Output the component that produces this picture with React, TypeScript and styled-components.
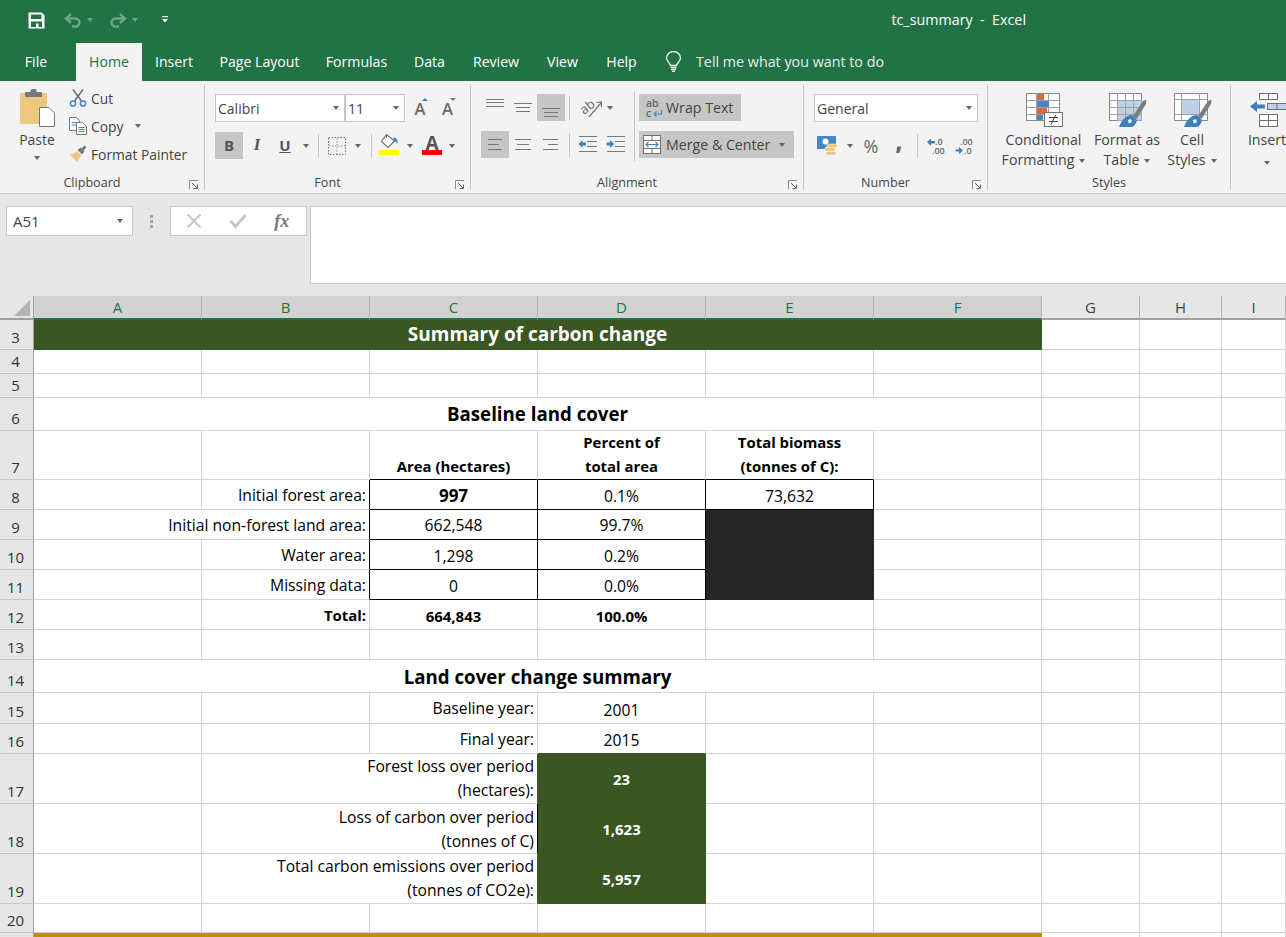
import React from 'react';
import styled, { createGlobalStyle } from 'styled-components';

const UI_FONT = '"Open Sans", "Noto Sans", "Liberation Sans", sans-serif';
const GREEN = '#217346';
const INK = '#444';
const LINE = '#d4d4d4';
const DARK_GREEN = '#3a5623';
const COLUMNS = '34px repeat(6, 168px) 98px 82px 1fr';

const GlobalStyle = createGlobalStyle`
  html, body { margin: 0; padding: 0; background: #fff; }
`;

const Page = styled.div`
  width: 1286px;
  height: 937px;
  overflow: hidden;
  background: #fff;
  font-family: ${UI_FONT};
  font-size: 14px;
  color: ${INK};
`;

/* title bar */
const TitleBar = styled.div`
  height: 41px;
  box-sizing: border-box;
  padding: 0 0 1px 28px;
  background: ${GREEN};
  display: flex;
  align-items: center;
`;
const QuickButton = styled.div<{ $w: number }>`
  width: ${(p) => p.$w}px;
  height: 20px;
  display: flex;
  align-items: center;
  gap: 5px;
`;
const DocTitle = styled.div`
  margin-left: auto;
  padding: 0 260px 2px 0;
  color: #fff;
  font-size: 14.3px;
  white-space: pre;
`;

/* tabs */
const TabBar = styled.div`
  height: 40px;
  background: ${GREEN};
  display: flex;
  align-items: flex-end;
`;
const Tab = styled.div<{ $w: number; $on?: boolean }>`
  width: ${(p) => p.$w}px;
  height: 38px;
  display: flex;
  align-items: center;
  justify-content: center;
  padding-bottom: 2px;
  box-sizing: border-box;
  font-size: 14.1px;
  white-space: nowrap;
  color: ${(p) => (p.$on ? GREEN : '#fff')};
  background: ${(p) => (p.$on ? '#f3f3f3' : 'transparent')};
`;
const FileTab = styled(Tab)`
  padding-right: 4px;
`;
const TellMe = styled.div`
  height: 38px;
  margin-left: 14px;
  display: flex;
  align-items: center;
  gap: 14px;
  padding-bottom: 2px;
  box-sizing: border-box;
  color: #e4efe9;
  font-size: 14.3px;
  white-space: nowrap;
`;

/* ribbon */
const Ribbon = styled.div`
  height: 108px;
  padding-top: 4px;
  background: #f3f3f3;
  border-bottom: 1px solid #d2d2d2;
  display: flex;
  overflow: hidden;
`;
const Group = styled.div<{ $w: number }>`
  position: relative;
  flex: none;
  width: ${(p) => p.$w}px;
  height: 105px;
  box-sizing: border-box;
  border-right: 1px solid #c6c6c6;
  display: flex;
  flex-direction: column;
  &:last-child { border-right: none; }
`;
const GroupBody = styled.div<{ $pad?: number }>`
  flex: 1;
  display: flex;
  min-height: 0;
  padding-left: ${(p) => p.$pad ?? 0}px;
`;
const GroupLabel = styled.div<{ $launcher?: boolean }>`
  height: 15px;
  line-height: 15px;
  padding-right: ${(p) => (p.$launcher ? 20 : 0)}px;
  text-align: center;
  font-size: 12.6px;
`;
const Launcher = styled.div`
  position: absolute;
  right: 5px;
  bottom: 0;
  width: 10px;
  height: 10px;
  line-height: 0;
`;
const Caret = styled.span<{ $c?: string }>`
  display: inline-block;
  flex: none;
  width: 0;
  height: 0;
  border-top: 4px solid ${(p) => p.$c || '#666'};
  border-left: 3.5px solid transparent;
  border-right: 3.5px solid transparent;
`;
const PasteColumn = styled.div`
  width: 36px;
  margin-left: 19px;
  padding-top: 3px;
  display: flex;
  flex-direction: column;
  align-items: center;
  font-size: 14px;
  line-height: 20px;
`;
const PasteText = styled.div`
  margin-top: 3px;
  margin-bottom: 6px;
`;
const SmallColumn = styled.div`
  margin-left: 14px;
  margin-top: -1px;
  display: flex;
  flex-direction: column;
`;
const SmallButton = styled.div`
  height: 28px;
  display: flex;
  align-items: center;
  gap: 4px;
  font-size: 13.8px;
  white-space: nowrap;
`;
const SmallIcon = styled.span`
  width: 18px;
  height: 18px;
  line-height: 0;
  flex: none;
`;
const CopyCaret = styled(Caret)`
  margin-left: 8px;
`;
const Stack = styled.div<{ $pad?: number }>`
  padding: 9px 0 0 ${(p) => p.$pad ?? 10}px;
  display: flex;
  flex-direction: column;
  gap: 10px;
`;
const ToolRow = styled.div<{ $tall?: boolean }>`
  display: flex;
  height: ${(p) => (p.$tall ? 28 : 27)}px;
  align-items: center;
`;
const ToolButton = styled.div<{ $w: number; $on?: boolean }>`
  position: relative;
  flex: none;
  width: ${(p) => p.$w}px;
  height: 27px;
  display: flex;
  align-items: center;
  justify-content: center;
  background: ${(p) => (p.$on ? '#c6c6c6' : 'transparent')};
`;
const OrientButton = styled(ToolButton)`
  gap: 2px;
`;
const WideButton = styled(ToolButton)<{ $pl: number; $gap: number }>`
  justify-content: flex-start;
  padding-left: ${(p) => p.$pl}px;
  gap: ${(p) => p.$gap}px;
  box-sizing: border-box;
  font-size: 14.2px;
  white-space: nowrap;
`;
const MergeCaret = styled(Caret)`
  margin-left: 4px;
`;
const Divider = styled.div<{ $gap: number }>`
  flex: none;
  width: 1px;
  height: 24px;
  margin: 0 ${(p) => p.$gap}px;
  background: #c6c6c6;
`;
const TallDivider = styled.div`
  flex: none;
  width: 1px;
  height: 70px;
  margin: 6px 4px 0 4px;
  background: #c6c6c6;
`;
const SelectBox = styled.div<{ $w: number }>`
  flex: none;
  width: ${(p) => p.$w}px;
  height: 28px;
  box-sizing: border-box;
  background: #fff;
  border: 1px solid #c6c6c6;
  display: flex;
  align-items: center;
  justify-content: space-between;
  padding: 0 5px 0 2px;
  font-size: 14px;
`;
const GrowButton = styled(ToolButton)`
  margin-left: 1px;
`;
const SizeStep = styled.span<{ $down?: boolean }>`
  position: relative;
  font-size: 16.5px;
  font-weight: 600;
  color: #6a6a6a;
  &::after {
    content: '';
    position: absolute;
    top: 1px;
    right: -3px;
    border-left: 3px solid transparent;
    border-right: 3px solid transparent;
    ${(p) =>
      p.$down ? 'border-top: 3px solid #4a7fb5;' : 'border-bottom: 3px solid #4a7fb5;'}
  }
`;
const FontMark = styled.span<{ $kind: 'b' | 'i' | 'u' }>`
  font-family: ${(p) => (p.$kind === 'i' ? '"Liberation Serif", serif' : UI_FONT)};
  font-size: ${(p) => (p.$kind === 'i' ? 17 : 15)}px;
  font-weight: 700;
  font-style: ${(p) => (p.$kind === 'i' ? 'italic' : 'normal')};
  text-decoration: ${(p) => (p.$kind === 'u' ? 'underline' : 'none')};
  padding-bottom: 2px;
  color: #555;
`;
const ColorMark = styled.div<{ $bar: string }>`
  position: relative;
  width: 20px;
  height: 27px;
  text-align: center;
  font-size: 19px;
  line-height: 22px;
  font-weight: 700;
  color: #555;
  &::after {
    content: '';
    position: absolute;
    left: 0;
    right: 0;
    top: 18px;
    height: 5px;
    background: ${(p) => p.$bar};
  }
`;
const FillMark = styled(ColorMark)`
  line-height: 0;
  padding-top: 1px;
`;
const Symbol = styled.span<{ $size: number; $bold?: boolean }>`
  font-size: ${(p) => p.$size}px;
  font-weight: ${(p) => (p.$bold ? 800 : 400)};
  padding-bottom: ${(p) => (p.$bold ? 10 : 0)}px;
  color: #666;
`;
const BigButton = styled.div<{ $w: number }>`
  flex: none;
  width: ${(p) => p.$w}px;
  padding-top: 8px;
  display: flex;
  flex-direction: column;
  align-items: center;
  font-size: 14.2px;
  line-height: 20px;
  text-align: center;
  white-space: nowrap;
`;
const BigIcon = styled.div`
  height: 35px;
  margin-bottom: 2px;
  padding-left: 2px;
  line-height: 0;
`;
const InlineCaret = styled(Caret)`
  margin-left: 5px;
  vertical-align: 2px;
`;

/* formula bar */
const FormulaBar = styled.div`
  height: 102px;
  box-sizing: border-box;
  padding: 12px 0 0 6px;
  background: #e6e6e6;
  display: flex;
  align-items: flex-start;
`;
const NameBox = styled.div`
  width: 127px;
  height: 30px;
  box-sizing: border-box;
  background: #fff;
  border: 1px solid #c6c6c6;
  display: flex;
  align-items: center;
  justify-content: space-between;
  padding: 0 9px 0 6px;
  font-size: 15px;
`;
const Grip = styled.div`
  width: 37px;
  height: 30px;
  display: flex;
  flex-direction: column;
  align-items: center;
  justify-content: center;
  gap: 2px;
  & > i { width: 3px; height: 3px; background: #a6a6a6; }
`;
const FuncBox = styled.div`
  width: 137px;
  height: 30px;
  box-sizing: border-box;
  background: #fff;
  border: 1px solid #c6c6c6;
  display: flex;
  align-items: center;
  justify-content: space-around;
  padding: 0 3px 0 1px;
`;
const FxMark = styled.span`
  font-family: "Liberation Serif", serif;
  font-style: italic;
  font-weight: 700;
  font-size: 18px;
  color: #777;
`;
const FormulaInput = styled.div`
  flex: 1;
  height: 78px;
  margin-left: 3px;
  box-sizing: border-box;
  background: #fff;
  border: 1px solid #c6c6c6;
  border-right: none;
`;

/* sheet */
const HeaderRow = styled.div`
  display: grid;
  grid-template-columns: ${COLUMNS};
  height: 24px;
  background: #e6e6e6;
`;
const Corner = styled.div`
  box-sizing: border-box;
  padding: 4px 0 0 14px;
  border-right: 1px solid #9f9f9f;
  border-bottom: 2px solid #9f9f9f;
  line-height: 0;
`;
const ColHead = styled.div<{ $on?: boolean }>`
  box-sizing: border-box;
  display: flex;
  align-items: center;
  justify-content: center;
  font-size: 15px;
  background: ${(p) => (p.$on ? '#d2d2d2' : '#e6e6e6')};
  color: ${(p) => (p.$on ? GREEN : INK)};
  border-right: 1px solid #b4b4b4;
  border-bottom: 2px solid ${(p) => (p.$on ? GREEN : '#9f9f9f')};
`;
const Row = styled.div<{ $h: number }>`
  display: grid;
  grid-template-columns: ${COLUMNS};
  grid-template-rows: minmax(0, 1fr);
  height: ${(p) => p.$h}px;
`;
const RowHead = styled.div`
  box-sizing: border-box;
  min-height: 0;
  background: #e6e6e6;
  border-right: 1px solid #9f9f9f;
  border-bottom: 1px solid #c6c6c6;
  display: flex;
  align-items: flex-end;
  justify-content: center;
  padding-right: 2px;
  font-size: 15px;
  line-height: 24px;
  color: #333;
`;

type CellProps = {
  $span?: number;
  $align?: 'left' | 'center' | 'right';
  $v?: 'center' | 'end';
  $weight?: number;
  $size?: number;
  $fill?: string;
  $color?: string;
  $r?: string;
  $b?: string;
  $lift?: number;
};

const Cell = styled.div<CellProps>`
  box-sizing: border-box;
  min-width: 0;
  min-height: 0;
  grid-column: span ${(p) => p.$span ?? 1};
  display: flex;
  flex-direction: column;
  justify-content: ${(p) => (p.$v === 'center' ? 'center' : 'flex-end')};
  text-align: ${(p) => p.$align ?? 'center'};
  padding: 0 ${(p) => (p.$align === 'right' ? 3 : 0)}px ${(p) => p.$lift ?? 1}px 0;
  font-size: ${(p) => p.$size ?? 15.7}px;
  font-weight: ${(p) => p.$weight ?? 400};
  line-height: 24px;
  white-space: nowrap;
  color: ${(p) => p.$color ?? '#000'};
  background: ${(p) => p.$fill ?? '#fff'};
  border-right: 1px solid ${(p) => p.$r ?? p.$fill ?? LINE};
  border-bottom: 1px solid ${(p) => p.$b ?? p.$fill ?? LINE};
`;
const ResultCell = styled(Cell)`
  padding-top: 2px;
`;

const Blanks = ({ n }: { n: number }) => (
  <>
    {Array.from({ length: n }, (_, i) => (
      <Cell key={i} />
    ))}
  </>
);

const Gold = styled.div`
  grid-column: span 6;
  background: #bf8f00;
`;

/* icons */
const SaveIcon = () => (
  <svg width="17" height="17" viewBox="0 0 17 17">
    <path d="M0.5 0.5H13.5L16.5 3.5V16.5H0.5Z" fill="#fff" />
    <rect x="3" y="2.5" width="10.5" height="4.5" fill={GREEN} />
    <rect x="3" y="9.5" width="11" height="5.5" fill={GREEN} />
    <rect x="8" y="11.5" width="2.5" height="3.5" fill="#fff" />
  </svg>
);
const UndoIcon = ({ flip }: { flip?: boolean }) => (
  <svg width="18" height="15" viewBox="0 0 18 15">
    <g transform={flip ? 'translate(18 0) scale(-1 1)' : undefined}>
      <path d="M7 1L2 5.5L7 10M2.5 5.5H11.5A4 4 0 0 1 11.5 13.5H8" fill="none" stroke="#6aa588" strokeWidth="2.4" />
    </g>
  </svg>
);
const CustomizeIcon = () => (
  <svg width="8" height="8" viewBox="0 0 8 8">
    <rect x="1" y="0" width="6" height="1.2" fill="#fff" />
    <path d="M1 3H7L4 6.5Z" fill="#fff" />
  </svg>
);
const BulbIcon = () => (
  <svg width="17" height="21" viewBox="0 0 17 21">
    <path d="M5.5 14.5C5 11.5 1.5 10.5 1.5 7A7 6.5 0 0 1 15.5 7C15.5 10.5 12 11.5 11.5 14.5Z" fill="none" stroke="#eef5f1" strokeWidth="1.3" />
    <path d="M5.5 16.5H11.5M6 18.5H11M7 20.3H10" stroke="#eef5f1" strokeWidth="1.3" />
  </svg>
);
const PasteIcon = () => (
  <svg width="36" height="39" viewBox="0 0 36 39">
    <rect x="1" y="5" width="27" height="31" rx="1" fill="#edc87e" />
    <rect x="6" y="4" width="17" height="5" rx="1" fill="#787878" />
    <rect x="11.5" y="1" width="6" height="4" rx="1.5" fill="#787878" />
    <path d="M20.5 19.5H30L35.5 25V38.5H20.5Z" fill="#fff" stroke="#787878" />
  </svg>
);
const ScissorsIcon = () => (
  <svg width="18" height="18" viewBox="0 0 18 18">
    <path d="M5.5 12L14 0.5M12.5 12L4 0.5" stroke="#6f6f6f" strokeWidth="1.6" fill="none" />
    <circle cx="4" cy="14.5" r="2.6" fill="none" stroke="#4a86c5" strokeWidth="1.5" />
    <circle cx="14" cy="14.5" r="2.6" fill="none" stroke="#4a86c5" strokeWidth="1.5" />
  </svg>
);
const CopyIcon = () => (
  <svg width="18" height="18" viewBox="0 0 18 18">
    <path d="M0.5 0.5H7.5L10.5 3.5V13.5H0.5Z" fill="#fff" stroke="#777" />
    <path d="M2.5 5.5H8M2.5 8H8" stroke="#4a86c5" />
    <path d="M7.5 5.5H13.5L17.5 9.5V17.5H7.5Z" fill="#fff" stroke="#777" />
    <path d="M9.5 10.5H15.5M9.5 12.5H15.5M9.5 14.5H15.5" stroke="#4a86c5" />
  </svg>
);
const PainterIcon = () => (
  <svg width="18" height="18" viewBox="0 0 18 18">
    <path d="M0.5 9.5C4 10 6.5 7.5 7.5 6L12.5 10.5C11 12.5 9.5 15 7.5 17C5.5 14 3 11.5 0.5 9.5Z" fill="#ecc587" />
    <path d="M8.5 5L11.5 2.5L12.5 3.5L15.5 0.5L17.5 2.5L14.5 5.5L15.5 6.5L13 9.5Z" fill="#787878" />
  </svg>
);
const BordersIcon = () => (
  <svg width="18" height="18" viewBox="0 0 18 18">
    <rect x="0.5" y="0.5" width="17" height="17" fill="none" stroke="#777" strokeDasharray="1.5 1.5" />
    <path d="M9 1V17M1 9H17" stroke="#999" strokeDasharray="1.5 1.5" />
  </svg>
);
const FillIcon = () => (
  <svg width="20" height="17" viewBox="0 0 20 17">
    <path d="M7.5 1.5L2.5 8.5L9 14.5L15.5 8Z" fill="#fff" stroke="#6f6f6f" strokeWidth="1.2" />
    <path d="M7.5 1V5" stroke="#6f6f6f" strokeWidth="1.2" />
    <path d="M14 4.5C17.5 4.5 19 7 18.5 11C17.5 9 16.5 8 15.5 8Z" fill="#4a7fb5" />
  </svg>
);
const LinesIcon = ({ lines }: { lines: number[][] }) => (
  <svg width="20" height="20" viewBox="0 0 20 20">
    {lines.map(([x1, x2, y], i) => (
      <line key={i} x1={x1} x2={x2} y1={y} y2={y} stroke="#777" />
    ))}
  </svg>
);
const OrientationIcon = () => (
  <svg width="26" height="26" viewBox="0 0 26 26" overflow="visible">
    <text x="2" y="17" fontSize="13" fontFamily={UI_FONT} fill="#666" transform="rotate(-38 8 14)">ab</text>
    <path d="M10 22L22 8" stroke="#777" strokeWidth="1.2" />
    <path d="M17.5 7.5L22.5 7L22.5 12" fill="none" stroke="#777" strokeWidth="1.2" />
  </svg>
);
const IndentIcon = ({ more }: { more?: boolean }) => (
  <svg width="20" height="20" viewBox="0 0 20 20">
    <path d="M1 1.5H19M9 6.5H19M9 11.5H19M1 16.5H19" stroke="#777" fill="none" />
    <path
      d={
        more
          ? 'M8 9L4 5V7.5H0.5V10.5H4V13Z'
          : 'M0.5 9L4.5 5V7.5H8V10.5H4.5V13Z'
      }
      fill="#3f7fbf"
    />
  </svg>
);
const WrapIcon = () => (
  <svg width="18" height="26" viewBox="0 0 18 26">
    <text x="0" y="12" fontSize="10.5" fontWeight="600" fontFamily={UI_FONT} fill="#666">ab</text>
    <text x="0" y="22" fontSize="10.5" fontWeight="600" fontFamily={UI_FONT} fill="#666">c</text>
    <path d="M15.5 15V19H8M10.5 16.5L8 19L10.5 21.5" fill="none" stroke="#4a86c5" strokeWidth="1.2" />
  </svg>
);
const MergeIcon = () => (
  <svg width="18" height="19" viewBox="0 0 18 19">
    <rect x="0.5" y="0.5" width="17" height="18" fill="#fff" stroke="#6f6f6f" />
    <path d="M0.5 5.5H17.5M0.5 13.5H17.5M9 0.5V5.5M9 13.5V18.5" stroke="#6f6f6f" />
    <path d="M3 9.5H15M5.5 7L3 9.5L5.5 12M12.5 7L15 9.5L12.5 12" fill="none" stroke="#3f7fbf" strokeWidth="1.1" />
  </svg>
);
const CurrencyIcon = () => (
  <svg width="22" height="20" viewBox="0 0 22 20">
    <rect x="0" y="0" width="19" height="11" fill="#4a86c5" />
    <rect x="0" y="11" width="8" height="2" fill="#4a86c5" />
    <circle cx="8.5" cy="5.5" r="3" fill="#fff" />
    <rect x="10" y="8" width="10" height="3.5" rx="1" fill="#edc87e" stroke="#f3f3f3" strokeWidth="0.5" />
    <rect x="8" y="11.5" width="10" height="3.5" rx="1" fill="#edc87e" stroke="#f3f3f3" strokeWidth="0.5" />
    <rect x="9" y="15.5" width="10" height="3.5" rx="1" fill="#edc87e" stroke="#f3f3f3" strokeWidth="0.5" />
  </svg>
);
const DecimalIcon = ({ less }: { less?: boolean }) => (
  <svg width="18" height="24" viewBox="0 0 18 24">
    <text x={less ? 5 : 8} y="11" fontSize="9" fontWeight="600" fontFamily={UI_FONT} fill="#666">{less ? '.00' : '.0'}</text>
    <text x={less ? 9 : 5} y="20" fontSize="9" fontWeight="600" fontFamily={UI_FONT} fill="#666">{less ? '.0' : '.00'}</text>
    <path
      d={less ? 'M0.5 15.5H4V13L8 16.5L4 20V17.5H0.5Z' : 'M0 8L4 4.5V7H8V9.5H4V12Z'}
      fill="#3f7fbf"
    />
  </svg>
);
const ConditionalIcon = () => (
  <svg width="38" height="35" viewBox="0 0 38 35">
    <rect x="0.5" y="0.5" width="33" height="27" fill="#fff" stroke="#8a8a8a" />
    <path d="M0.5 7.5H33.5M0.5 14.5H33.5M0.5 21.5H33.5M10.5 0.5V27.5M22.5 0.5V27.5" stroke="#a0a0a0" />
    <rect x="11" y="1" width="7" height="6" fill="#dd6b40" />
    <rect x="11" y="8" width="12" height="6" fill="#4a86c5" />
    <rect x="11" y="15" width="10" height="6" fill="#dd6b40" />
    <rect x="11" y="22" width="6" height="5" fill="#4a86c5" />
    <rect x="18.5" y="19.5" width="18" height="14" fill="#fff" stroke="#6f6f6f" />
    <path d="M23 24.5H32M23 28.5H32M30 21.5L25 31.5" fill="none" stroke="#444" strokeWidth="1" />
  </svg>
);
const BrushMark = () => (
  <>
    <path d="M24 23L34 8L37.5 6.5L37 11L27.5 26Z" fill="#7d7d7d" />
    <path d="M10 34C12 28 17 22 23 22L28 27C27 31 25 34 22 34Z" fill="#3f7fbf" />
    <path d="M19 27C20.5 25.5 22.5 26 23 28C22.5 30 21 30.5 19.5 30Z" fill="#f3f3f3" />
  </>
);
const TableIcon = () => (
  <svg width="38" height="35" viewBox="0 0 38 35">
    <rect x="0.5" y="0.5" width="32" height="27" fill="#fff" stroke="#8a8a8a" />
    <rect x="8.5" y="7.5" width="24" height="20" fill="#bcd0e6" />
    <path d="M0.5 7.5H32.5M0.5 14.5H32.5M0.5 21.5H32.5M8.5 0.5V27.5M16.5 0.5V27.5M24.5 0.5V27.5" stroke="#a0a0a0" />
    <BrushMark />
  </svg>
);
const StylesIcon = () => (
  <svg width="38" height="35" viewBox="0 0 38 35">
    <rect x="0.5" y="0.5" width="33" height="27" fill="#fff" stroke="#8a8a8a" />
    <rect x="7.5" y="6.5" width="18" height="15" fill="#bcd0e6" stroke="#a0a0a0" />
    <path d="M0.5 6.5H33.5M0.5 21.5H33.5M7.5 0.5V27.5M25.5 0.5V27.5" stroke="#a0a0a0" />
    <BrushMark />
  </svg>
);
const InsertIcon = () => (
  <svg width="37" height="35" viewBox="0 0 37 35">
    <rect x="9.5" y="0.5" width="18" height="6" fill="#fff" stroke="#6f6f6f" />
    <path d="M18.5 0.5V6.5" stroke="#6f6f6f" />
    <path d="M0 13.5L7 8V11.5H15V15.5H7V19Z" fill="#3f7fbf" />
    <rect x="17.5" y="10.5" width="19" height="6" fill="#bcd0e6" stroke="#6f6f6f" />
    <path d="M27 10.5V16.5" stroke="#6f6f6f" />
    <rect x="9.5" y="21.5" width="18" height="12" fill="#fff" stroke="#6f6f6f" />
    <path d="M18.5 21.5V33.5M9.5 27.5H27.5" stroke="#6f6f6f" />
  </svg>
);
const LauncherIcon = () => (
  <svg width="10" height="10" viewBox="0 0 10 10">
    <path d="M0.5 9V0.5H9" fill="none" stroke="#8a8a8a" />
    <path d="M3 3L8 8M8.5 4.5V8.5H4.5" fill="none" stroke="#666" />
  </svg>
);
const CancelIcon = () => (
  <svg width="16" height="16" viewBox="0 0 16 16">
    <path d="M1.5 1.5L14.5 14.5M14.5 1.5L1.5 14.5" stroke="#c6c6c6" strokeWidth="2" />
  </svg>
);
const EnterIcon = () => (
  <svg width="18" height="16" viewBox="0 0 18 16">
    <path d="M1.5 8L6.5 13.5L16.5 2" fill="none" stroke="#c6c6c6" strokeWidth="3" />
  </svg>
);
const CornerIcon = () => (
  <svg width="16" height="16" viewBox="0 0 16 16">
    <path d="M16 0V16H0Z" fill="#b4b4b4" />
  </svg>
);

const tabs: [string, number][] = [
  ['Home', 66],
  ['Insert', 64],
  ['Page Layout', 107],
  ['Formulas', 87],
  ['Data', 59],
  ['Review', 74],
  ['View', 59],
  ['Help', 59],
];

const App: React.FC = () => (
  <Page>
    <GlobalStyle />
    <TitleBar>
      <QuickButton $w={36}><SaveIcon /></QuickButton>
      <QuickButton $w={45}><UndoIcon /><Caret $c="#6aa588" /></QuickButton>
      <QuickButton $w={52}><UndoIcon flip /><Caret $c="#6aa588" /></QuickButton>
      <QuickButton $w={10}><CustomizeIcon /></QuickButton>
      <DocTitle>tc_summary  -  Excel</DocTitle>
    </TitleBar>
    <TabBar>
      <FileTab $w={76}>File</FileTab>
      {tabs.map(([name, w]) => (
        <Tab key={name} $w={w} $on={name === 'Home'}>{name}</Tab>
      ))}
      <TellMe><BulbIcon />Tell me what you want to do</TellMe>
    </TabBar>

    <Ribbon>
      <Group $w={205}>
        <GroupBody>
          <PasteColumn>
            <PasteIcon />
            <PasteText>Paste</PasteText>
            <Caret />
          </PasteColumn>
          <SmallColumn>
            <SmallButton><SmallIcon><ScissorsIcon /></SmallIcon>Cut</SmallButton>
            <SmallButton><SmallIcon><CopyIcon /></SmallIcon>Copy<CopyCaret /></SmallButton>
            <SmallButton><SmallIcon><PainterIcon /></SmallIcon>Format Painter</SmallButton>
          </SmallColumn>
        </GroupBody>
        <GroupLabel $launcher>Clipboard</GroupLabel>
        <Launcher><LauncherIcon /></Launcher>
      </Group>

      <Group $w={266}>
        <GroupBody>
          <Stack>
            <ToolRow $tall>
              <SelectBox $w={130}>Calibri<Caret /></SelectBox>
              <SelectBox $w={60}>11<Caret /></SelectBox>
              <GrowButton $w={28}><SizeStep>A</SizeStep></GrowButton>
              <ToolButton $w={27}><SizeStep $down>A</SizeStep></ToolButton>
            </ToolRow>
            <ToolRow>
              <ToolButton $w={28} $on><FontMark $kind="b">B</FontMark></ToolButton>
              <ToolButton $w={28}><FontMark $kind="i">I</FontMark></ToolButton>
              <ToolButton $w={28}><FontMark $kind="u">U</FontMark></ToolButton>
              <ToolButton $w={14}><Caret /></ToolButton>
              <Divider $gap={5} />
              <ToolButton $w={25}><BordersIcon /></ToolButton>
              <ToolButton $w={17}><Caret /></ToolButton>
              <Divider $gap={5} />
              <ToolButton $w={24}>
                <FillMark $bar="#ffff00"><FillIcon /></FillMark>
              </ToolButton>
              <ToolButton $w={18}><Caret /></ToolButton>
              <ToolButton $w={26}><ColorMark $bar="#ff0000">A</ColorMark></ToolButton>
              <ToolButton $w={13}><Caret /></ToolButton>
            </ToolRow>
          </Stack>
        </GroupBody>
        <GroupLabel $launcher>Font</GroupLabel>
        <Launcher><LauncherIcon /></Launcher>
      </Group>

      <Group $w={333}>
        <GroupBody>
          <Stack>
            <ToolRow>
              <ToolButton $w={28}><LinesIcon lines={[[1, 19, 1.5], [1, 19, 4.5], [1, 19, 8.5]]} /></ToolButton>
              <ToolButton $w={28}><LinesIcon lines={[[1, 19, 5.5], [3, 17, 9.5], [3, 17, 13.5]]} /></ToolButton>
              <ToolButton $w={28} $on><LinesIcon lines={[[1, 19, 10.5], [3, 17, 14.5], [3, 17, 18.5]]} /></ToolButton>
              <Divider $gap={4} />
              <OrientButton $w={44}><OrientationIcon /><Caret /></OrientButton>
            </ToolRow>
            <ToolRow>
              <ToolButton $w={28} $on><LinesIcon lines={[[3, 17, 4.5], [3, 14, 9.5], [3, 17, 14.5]]} /></ToolButton>
              <ToolButton $w={28}><LinesIcon lines={[[2, 18, 4.5], [4, 16, 9.5], [2, 18, 14.5]]} /></ToolButton>
              <ToolButton $w={28}><LinesIcon lines={[[2, 17, 4.5], [7, 17, 9.5], [2, 17, 14.5]]} /></ToolButton>
              <Divider $gap={4} />
              <ToolButton $w={28}><IndentIcon /></ToolButton>
              <ToolButton $w={28}><IndentIcon more /></ToolButton>
            </ToolRow>
          </Stack>
          <TallDivider />
          <Stack $pad={0}>
            <ToolRow><WideButton $w={102} $on $pl={7} $gap={2}><WrapIcon />Wrap Text</WideButton></ToolRow>
            <ToolRow>
              <WideButton $w={155} $on $pl={4} $gap={5}>
                <MergeIcon />Merge &amp; Center<MergeCaret />
              </WideButton>
            </ToolRow>
          </Stack>
        </GroupBody>
        <GroupLabel $launcher>Alignment</GroupLabel>
        <Launcher><LauncherIcon /></Launcher>
      </Group>

      <Group $w={184}>
        <GroupBody>
          <Stack>
            <ToolRow $tall>
              <SelectBox $w={164}>General<Caret /></SelectBox>
            </ToolRow>
            <ToolRow>
              <ToolButton $w={28}><CurrencyIcon /></ToolButton>
              <ToolButton $w={15}><Caret /></ToolButton>
              <ToolButton $w={28}><Symbol $size={18}>%</Symbol></ToolButton>
              <ToolButton $w={28}><Symbol $size={22} $bold>,</Symbol></ToolButton>
              <Divider $gap={4} />
              <ToolButton $w={28}><DecimalIcon /></ToolButton>
              <ToolButton $w={28}><DecimalIcon less /></ToolButton>
            </ToolRow>
          </Stack>
        </GroupBody>
        <GroupLabel $launcher>Number</GroupLabel>
        <Launcher><LauncherIcon /></Launcher>
      </Group>

      <Group $w={243}>
        <GroupBody $pad={12}>
          <BigButton $w={87}>
            <BigIcon><ConditionalIcon /></BigIcon>
            Conditional
            <div>Formatting<InlineCaret /></div>
          </BigButton>
          <BigButton $w={80}>
            <BigIcon><TableIcon /></BigIcon>
            Format as
            <div>Table<InlineCaret /></div>
          </BigButton>
          <BigButton $w={50}>
            <BigIcon><StylesIcon /></BigIcon>
            Cell
            <div>Styles<InlineCaret /></div>
          </BigButton>
        </GroupBody>
        <GroupLabel>Styles</GroupLabel>
      </Group>

      <Group $w={60}>
        <GroupBody $pad={5}>
          <BigButton $w={62}>
            <BigIcon><InsertIcon /></BigIcon>
            Insert
            <div><Caret /></div>
          </BigButton>
        </GroupBody>
      </Group>
    </Ribbon>

    <FormulaBar>
      <NameBox>A51<Caret /></NameBox>
      <Grip><i /><i /><i /></Grip>
      <FuncBox><CancelIcon /><EnterIcon /><FxMark>fx</FxMark></FuncBox>
      <FormulaInput />
    </FormulaBar>

    <HeaderRow>
      <Corner><CornerIcon /></Corner>
      {['A', 'B', 'C', 'D', 'E', 'F'].map((c) => <ColHead key={c} $on>{c}</ColHead>)}
      {['G', 'H', 'I'].map((c) => <ColHead key={c}>{c}</ColHead>)}
    </HeaderRow>

    <Row $h={30}>
      <RowHead>3</RowHead>
      <Cell $span={6} $fill={DARK_GREEN} $color="#fff" $size={19} $weight={700} $v="center">Summary of carbon change</Cell>
      <Blanks n={3} />
    </Row>
    <Row $h={24}><RowHead>4</RowHead><Blanks n={9} /></Row>
    <Row $h={24}><RowHead>5</RowHead><Blanks n={9} /></Row>
    <Row $h={33}>
      <RowHead>6</RowHead>
      <Cell $span={6} $size={18.7} $weight={700} $lift={4}>Baseline land cover</Cell>
      <Blanks n={3} />
    </Row>
    <Row $h={49}>
      <RowHead>7</RowHead>
      <Blanks n={2} />
      <Cell $weight={700} $size={14.9} $b="#000">Area (hectares)</Cell>
      <Cell $weight={700} $size={14.9} $b="#000">Percent of<br />total area</Cell>
      <Cell $weight={700} $size={14.9} $b="#000">Total biomass<br />(tonnes of C):</Cell>
      <Blanks n={4} />
    </Row>
    <Row $h={30}>
      <RowHead>8</RowHead>
      <Cell />
      <Cell $align="right" $r="#000" $lift={2}>Initial forest area:</Cell>
      <Cell $size={17} $weight={700} $r="#000" $b="#000">997</Cell>
      <Cell $r="#000" $b="#000">0.1%</Cell>
      <Cell $r="#000" $b="#000">73,632</Cell>
      <Blanks n={4} />
    </Row>
    <Row $h={30}>
      <RowHead>9</RowHead>
      <Cell $span={2} $align="right" $r="#000" $lift={2}>Initial non-forest land area:</Cell>
      <Cell $r="#000" $b="#000" $lift={2}>662,548</Cell>
      <Cell $r="#000" $b="#000" $lift={2}>99.7%</Cell>
      <Cell $fill="#262626" />
      <Blanks n={4} />
    </Row>
    <Row $h={30}>
      <RowHead>10</RowHead>
      <Cell />
      <Cell $align="right" $r="#000" $lift={2}>Water area:</Cell>
      <Cell $r="#000" $b="#000">1,298</Cell>
      <Cell $r="#000" $b="#000">0.2%</Cell>
      <Cell $fill="#262626" />
      <Blanks n={4} />
    </Row>
    <Row $h={30}>
      <RowHead>11</RowHead>
      <Cell />
      <Cell $align="right" $r="#000" $lift={2}>Missing data:</Cell>
      <Cell $r="#000" $b="#000">0</Cell>
      <Cell $r="#000" $b="#000">0.0%</Cell>
      <Cell $fill="#262626" />
      <Blanks n={4} />
    </Row>
    <Row $h={30}>
      <RowHead>12</RowHead>
      <Cell />
      <Cell $align="right" $weight={700} $size={14.9} $lift={2}>Total:</Cell>
      <Cell $weight={700} $size={14.9}>664,843</Cell>
      <Cell $weight={700} $size={14.9}>100.0%</Cell>
      <Blanks n={5} />
    </Row>
    <Row $h={30}><RowHead>13</RowHead><Blanks n={9} /></Row>
    <Row $h={33}>
      <RowHead>14</RowHead>
      <Cell $span={6} $size={18.7} $weight={700} $lift={3}>Land cover change summary</Cell>
      <Blanks n={3} />
    </Row>
    <Row $h={31}>
      <RowHead>15</RowHead>
      <Blanks n={2} />
      <Cell $align="right" $lift={3}>Baseline year:</Cell>
      <Cell>2001</Cell>
      <Blanks n={5} />
    </Row>
    <Row $h={30}>
      <RowHead>16</RowHead>
      <Blanks n={2} />
      <Cell $align="right" $lift={2}>Final year:</Cell>
      <Cell $b={DARK_GREEN}>2015</Cell>
      <Blanks n={5} />
    </Row>
    <Row $h={50}>
      <RowHead>17</RowHead>
      <Cell />
      <Cell $span={2} $align="right" $r={DARK_GREEN}>Forest loss over period<br />(hectares):</Cell>
      <ResultCell $fill={DARK_GREEN} $color="#fff" $weight={700} $size={14.9} $v="center">23</ResultCell>
      <Blanks n={5} />
    </Row>
    <Row $h={50}>
      <RowHead>18</RowHead>
      <Cell />
      <Cell $span={2} $align="right" $r="#000" $lift={0}>Loss of carbon over period<br />(tonnes of C)</Cell>
      <ResultCell $fill={DARK_GREEN} $color="#fff" $weight={700} $size={14.9} $v="center">1,623</ResultCell>
      <Blanks n={5} />
    </Row>
    <Row $h={50}>
      <RowHead>19</RowHead>
      <Cell />
      <Cell $span={2} $align="right" $r={DARK_GREEN}>Total carbon emissions over period<br />(tonnes of CO2e):</Cell>
      <ResultCell $fill={DARK_GREEN} $color="#fff" $weight={700} $size={14.9} $v="center">5,957</ResultCell>
      <Blanks n={5} />
    </Row>
    <Row $h={29}><RowHead>20</RowHead><Blanks n={9} /></Row>
    <Row $h={8}><RowHead /><Gold /><Blanks n={3} /></Row>
  </Page>
);

export default App;
